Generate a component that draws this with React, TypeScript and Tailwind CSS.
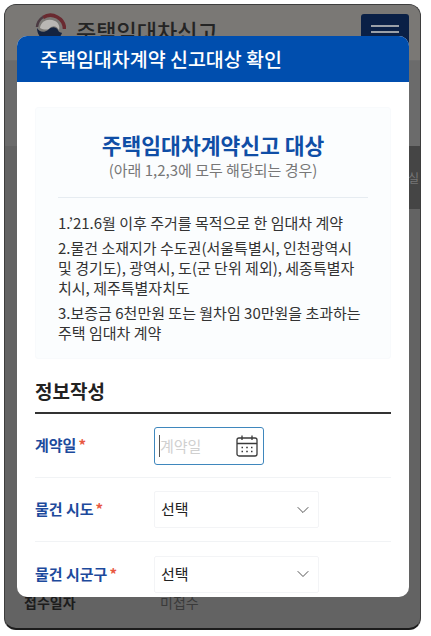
import { ChevronDown } from "lucide-react"

const font = "font-['Noto_Sans_CJK_KR','Noto_Sans',sans-serif]"

function Logo() {
  return (
    <svg width="31" height="31" viewBox="0 0 31 31" className="shrink-0">
      <path d="M8 4.5A14 14 0 0 1 29.5 16" fill="none" stroke="#6a2a30" strokeWidth="3.6" />
      <path d="M2 14A13.5 13.5 0 0 1 8 4" fill="none" stroke="#4b3a42" strokeWidth="2.5" />
      <path d="M5 15C6 7 14 5 20 8C24 10 25 14 24 17C21 12 17 13 15 15C13 17 9 17 5 15Z" fill="#b9b7b4" />
      <path d="M2 15C4 19 9 20 13 17C17 13 21 14 23 17C24 20 26 19 27 20C24 29 12 31 6 25C3 22 2 18 2 15Z" fill="#14233f" />
    </svg>
  )
}

function CalendarIcon() {
  return (
    <svg width="24" height="24" viewBox="0 0 24 24" fill="none" stroke="#3a3a3a" strokeWidth="1.3">
      <rect x="2" y="4" width="20" height="18" rx="2" />
      <path d="M2 9.5H22M7 1.5V6M17 1.5V6" />
      <path d="M6.5 13.5H8M11.2 13.5H12.8M16 13.5H17.5M6.5 17.5H8M11.2 17.5H12.8M16 17.5H17.5" strokeWidth="1.6" />
    </svg>
  )
}

function Field({ label, last, children }: { label: string; last?: boolean; children: React.ReactNode }) {
  return (
    <div className={`flex items-center h-[64px] ${last ? "" : "border-b border-[#f1f3f5]"}`}>
      <div className="w-[119px] text-[15px] font-bold text-[#1d4a9c]">
        {label}
        <span className="text-[#e8573f] ml-[2px]">*</span>
      </div>
      {children}
    </div>
  )
}

function SelectBox() {
  return (
    <div className="w-[165px] h-[37px] border border-[#f3f4f6] rounded-[2px] flex items-center justify-between pl-[6px] pr-[5px] text-[15px] text-[#222222]">
      <span>선택</span>
      <ChevronDown size={20} strokeWidth={1.1} className="text-[#444444]" />
    </div>
  )
}

export default function App() {
  return (
    <div className={`relative w-[431px] h-[636px] bg-white overflow-hidden ${font}`}>
      {/* page behind the dim */}
      <div className="absolute left-[4px] top-[4px] w-[417px] h-[626px] bg-[#636363] rounded-[12px] border border-[#3e3e3e] border-b-2 border-b-[#1c1c1c] overflow-hidden">
        <div className="flex items-start h-[56px] pl-[30px] pr-[11px] pt-[8px] bg-[#7a7875] border-b border-[#6e6e6e]">
          <Logo />
          <span className="ml-[10px] text-[22px] leading-[34px] font-medium text-[#242424]">주택임대차신고</span>
          <div className="ml-auto w-[48px] h-[40px] bg-[#0a2046] rounded-[3px] flex flex-col items-center pt-[11px] gap-[4px] -translate-y-[-1px]">
            <div className="w-[28px] h-[2px] bg-[#9aa0a8]" />
            <div className="w-[28px] h-[2px] bg-[#9aa0a8]" />
          </div>
        </div>
        <div className="h-[85px] bg-[#6b6b6b]" />
        <div className="h-[63px] w-[12px] ml-auto bg-[#454545] flex items-center text-[12px] text-[#777777]">실</div>
        <div className="h-[389px]" />
        <div className="flex text-[14px] leading-[18px] mt-[-5px]">
          <span className="ml-[19px] w-[136px] font-bold text-[#1c1c1c]">접수일자</span>
          <span className="text-[#3a3a3a]">미접수</span>
        </div>
      </div>

      {/* modal */}
      <div className="absolute left-[17px] top-[36px] w-[392px] h-[561px] bg-white rounded-[10px] overflow-hidden flex flex-col">
        <div className="h-[46px] shrink-0 bg-[#004eae] flex items-center pl-[23px] text-[19.5px] font-medium text-white">
          주택임대차계약 신고대상 확인
        </div>
        <div className="px-[18px] pt-[25px]">
          <div className="h-[252px] bg-[#fbfdfe] border border-[#f8fafc] rounded-[3px] px-[22px]">
            <div className="pt-[22px] text-center text-[21.5px] font-bold leading-[30px] text-[#0f4ea6]">주택임대차계약신고 대상</div>
            <div className="text-center text-[15px] leading-[20px] text-[#777777]">(아래 1,2,3에 모두 해당되는 경우)</div>
            <div className="mt-[17px] border-t border-[#e6ecf1]" />
            <div className="mt-[15px] text-[15px] leading-[20px] text-[#333333] flex flex-col gap-[5px] break-all">
              <p>1.’21.6월 이후 주거를 목적으로 한 임대차 계약</p>
              <p>2.물건 소재지가 수도권(서울특별시, 인천광역시 및 경기도), 광역시, 도(군 단위 제외), 세종특별자치시, 제주특별자치도</p>
              <p>3.보증금 6천만원 또는 월차임 30만원을 초과하는 주택 임대차 계약</p>
            </div>
          </div>
          <div className="mt-[17px] text-[19px] font-bold leading-[30px] text-[#222222]">정보작성</div>
          <div className="mt-[6px] border-t-2 border-[#333333]" />
          <Field label="계약일">
            <div className="w-[110px] h-[38px] border border-[#3f87bd] rounded-[3px] flex items-center justify-between pl-[4px] pr-[4px] text-[15px] text-[#d0d0d0]">
              <span className="border-l border-[#555555] leading-[22px]">계약일</span>
              <CalendarIcon />
            </div>
          </Field>
          <Field label="물건 시도">
            <SelectBox />
          </Field>
          <Field label="물건 시군구" last>
            <SelectBox />
          </Field>
        </div>
      </div>
    </div>
  )
}
